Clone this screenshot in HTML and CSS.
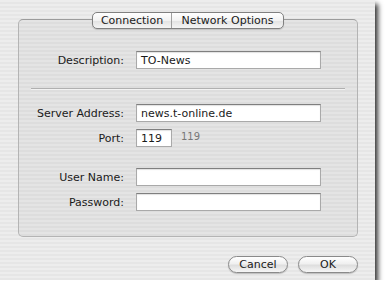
FILE: index.html
```html
<!DOCTYPE html>
<html lang="en">
<head>
<meta charset="UTF-8">
<title>Server Settings</title>
<link rel="stylesheet" href="styles.css">
</head>
<body>

<div class="window">
    <!-- group box with tabs over its top edge -->
    <div class="group">
        <div class="tabs">
            <span class="tab">Connection</span>
            <span class="tab selected">Network Options</span>
        </div>

        <div class="row first">
            <label>Description:</label>
            <div class="field wide">TO-News</div>
        </div>

        <div class="separator"></div>

        <div class="row server">
            <label>Server Address:</label>
            <div class="field wide">news.t-online.de</div>
        </div>
        <div class="row">
            <label>Port:</label>
            <div class="field port">119</div>
            <span class="hint">119</span>
        </div>

        <div class="row user">
            <label>User Name:</label>
            <div class="field wide"></div>
        </div>
        <div class="row">
            <label>Password:</label>
            <div class="field wide"></div>
        </div>
    </div>

    <div class="buttons">
        <button>Cancel</button>
        <button>OK</button>
    </div>
</div>

</body>
</html>
```
FILE: styles.css
```css
body {
margin: 0;
background: #fff;
font-family: "DejaVu Sans", "Liberation Sans", sans-serif;
font-size: 11px;
color: #1a1a1a;
}

.window {
width: 375px;
height: 280px;
box-sizing: border-box;
padding: 19px 0 0 18px;
background: repeating-linear-gradient(to bottom, #ededed 0 2px, #e6e6e6 2px 4px);
box-shadow: 3px 4px 5px rgba(0,0,0,0.8);
}

.group {
position: relative;
width: 340px;
height: 218px;
box-sizing: border-box;
border: 1px solid #b4b4b4;
border-top-color: #9c9c9c;
border-radius: 5px;
background: rgba(0,0,0,0.035);
padding-top: 31px;
}

.tabs {
position: absolute;
top: -8px;
left: 73px;
display: flex;
height: 17px;
box-sizing: border-box;
border: 1px solid #808080;
border-radius: 5px;
overflow: hidden;
background: linear-gradient(to bottom, #ffffff 0%, #f2f2f2 50%, #e2e2e2 51%, #f4f4f4 100%);
box-shadow: 0 1px 1px rgba(0,0,0,0.15);
}

.tab {
display: flex;
align-items: center;
justify-content: center;
width: 78px;
line-height: 15px;
}

.tab.selected {
width: 111px;
border-left: 1px solid #a0a0a0;
}

.row {
display: flex;
align-items: center;
gap: 12px;
margin-top: 7px;
}

.row.first {
margin-top: 0;
}

.row.server {
margin-top: 14px;
}

.row.user {
margin-top: 21px;
}

.row label {
width: 105px;
text-align: right;
}

.field {
height: 18px;
box-sizing: border-box;
background: #fff;
border: 1px solid #a9a9a9;
border-top-color: #7f7f7f;
box-shadow: inset 0 1px 1px rgba(0,0,0,0.12);
padding: 1px 4px 0 4px;
line-height: 15px;
font-size: 11px;
}

.field.wide {
width: 185px;
}

.field.port {
width: 36px;
}

.hint {
margin-left: -3px;
margin-top: -3px;
font-size: 10px;
color: #777;
}

.separator {
margin: 19px 12px 0 12px;
height: 1px;
background: #b0b0b0;
border-bottom: 1px solid #f2f2f2;
}

.buttons {
display: flex;
justify-content: flex-end;
gap: 10px;
width: 340px;
margin-top: 19px;
}

.buttons button {
width: 60px;
height: 17px;
padding: 0;
border: 1px solid #8a8a8a;
border-radius: 9px;
background: linear-gradient(to bottom, #ffffff 0%, #f0f0f0 45%, #dedede 55%, #f6f6f6 100%);
box-shadow: 0 1px 1px rgba(0,0,0,0.2);
font-family: "DejaVu Sans", "Liberation Sans", sans-serif;
font-size: 11px;
color: #1a1a1a;
line-height: 15px;
}
```
